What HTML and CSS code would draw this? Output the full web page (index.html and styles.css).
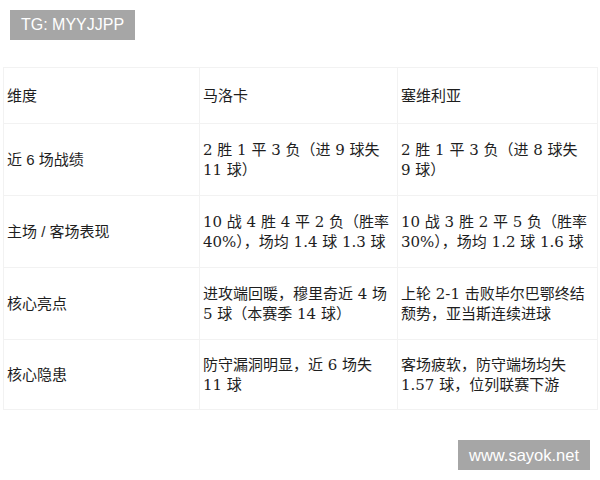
FILE: index.html
```html
<!DOCTYPE html>
<html lang="zh">
<head>
<meta charset="utf-8">
<link rel="stylesheet" href="styles.css">
</head>
<body>
<div class="page">
  <div class="tag">TG: MYYJJPP</div>
  <table class="stats">
    <colgroup>
      <col class="c1"><col class="c2"><col class="c3">
    </colgroup>
    <thead>
      <tr class="head">
        <th>维度</th>
        <th>马洛卡</th>
        <th>塞维利亚</th>
      </tr>
    </thead>
    <tbody>
      <tr>
        <td class="label">近 6 场战绩</td>
        <td>2 胜 1 平 3 负（进 9 球失<br>11 球）</td>
        <td>2 胜 1 平 3 负（进 8 球失<br>9 球）</td>
      </tr>
      <tr>
        <td class="label">主场 / 客场表现</td>
        <td>10 战 4 胜 4 平 2 负（胜率<br>40%），场均 1.4 球 1.3 球</td>
        <td>10 战 3 胜 2 平 5 负（胜率<br>30%），场均 1.2 球 1.6 球</td>
      </tr>
      <tr>
        <td class="label">核心亮点</td>
        <td>进攻端回暖，穆里奇近 4 场<br>5 球（本赛季 14 球）</td>
        <td>上轮 2-1 击败毕尔巴鄂终结<br>颓势，亚当斯连续进球</td>
      </tr>
      <tr class="last">
        <td class="label">核心隐患</td>
        <td>防守漏洞明显，近 6 场失<br>11 球</td>
        <td>客场疲软，防守端场均失<br>1.57 球，位列联赛下游</td>
      </tr>
    </tbody>
  </table>
  <div class="mark">www.sayok.net</div>
</div>
</body>
</html>
```
FILE: styles.css
```css
html, body {
  margin: 0;
  padding: 0;
  background: #ffffff;
}
.page {
  position: relative;
  width: 600px;
  height: 480px;
  overflow: hidden;
  padding: 10px 0 0 0;
  box-sizing: border-box;
}
.tag {
  display: inline-block;
  margin-left: 10px;
  height: 30px;
  line-height: 30px;
  padding: 0 11px;
  background: #a6a6a6;
  color: #ffffff;
  font-family: "Liberation Sans", Arial, sans-serif;
  font-size: 16px;
}
.stats {
  margin: 27px 0 0 3px;
  width: 594px;
  border-collapse: collapse;
  table-layout: fixed;
  color: #1e1e1e;
  font-size: 15px;
  line-height: 20px;
}
.c1 { width: 196px; }
.c2 { width: 198px; }
.c3 { width: 200px; }
.stats th,
.stats td {
  border: 1px solid #f2f2f2;
  text-align: left;
  vertical-align: middle;
  font-weight: normal;
  font-family: "DejaVu Serif", "Noto Sans CJK SC", serif;
  white-space: nowrap;
  padding-left: 3px;
  padding-right: 3px;
}
.stats th {
  font-family: "Liberation Sans", "Noto Sans CJK SC", sans-serif;
  padding-top: 18px;
  padding-bottom: 17px;
}
.stats td {
  padding-top: 16px;
  padding-bottom: 15px;
}
.stats tr.last td {
  padding-top: 15px;
  padding-bottom: 14px;
}
.stats td.label {
  font-family: "Liberation Sans", "Noto Sans CJK SC", sans-serif;
}
.mark {
  position: absolute;
  left: 458px;
  top: 440px;
  width: 132px;
  height: 30px;
  line-height: 30px;
  text-align: center;
  background: #a6a6a6;
  color: #ffffff;
  font-family: "Liberation Sans", Arial, sans-serif;
  font-size: 16.5px;
}
```
